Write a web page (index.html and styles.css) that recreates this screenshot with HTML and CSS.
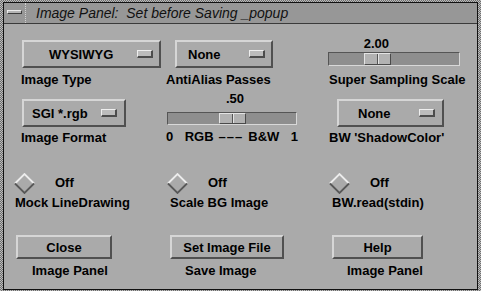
FILE: index.html
```html
<!DOCTYPE html>
<html lang="en">
<head>
  <meta charset="UTF-8">
  <meta name="viewport" content="width=device-width, initial-scale=1.0">
  <title>Image Panel</title>
  <link rel="stylesheet" href="styles.css">
</head>
<body>
  <div class="frame">
    <div class="window">
      <div class="titlebar">
        <div class="menu-btn"><span class="menu-bar"></span></div>
        <div class="title">Image Panel:  Set before Saving _popup</div>
      </div>

      <div class="panel">
        <!-- row 1 -->
        <div class="row row1">
          <div class="cell">
            <div class="btn opt opt-type"><span>WYSIWYG</span><span class="ind"></span></div>
            <div class="lbl lbl-type">Image Type</div>
          </div>
          <div class="cell">
            <div class="btn opt opt-alias"><span>None</span><span class="ind"></span></div>
            <div class="lbl lbl-alias">AntiAlias Passes</div>
          </div>
          <div class="cell">
            <div class="scale scale-super" style="--pos: 35px">
              <div class="scale-value">2.00</div>
              <div class="trough"><div class="thumb"></div></div>
            </div>
            <div class="lbl lbl-super">Super Sampling Scale</div>
          </div>
        </div>

        <!-- row 2 -->
        <div class="row row2">
          <div class="cell">
            <div class="btn opt opt-fmt"><span>SGI *.rgb</span><span class="ind"></span></div>
            <div class="lbl lbl-fmt">Image Format</div>
          </div>
          <div class="cell">
            <div class="scale scale-rgb" style="--pos: 51px">
              <div class="scale-value">.50</div>
              <div class="trough"><div class="thumb"></div></div>
              <div class="range">
                <span>0</span>
                <span class="range-mid"><span>RGB</span><span class="dashes">–––</span><span>B&amp;W</span></span>
                <span>1</span>
              </div>
            </div>
          </div>
          <div class="cell">
            <div class="btn opt opt-bw"><span>None</span><span class="ind"></span></div>
            <div class="lbl lbl-bw">BW 'ShadowColor'</div>
          </div>
        </div>

        <!-- row 3 -->
        <div class="row row3">
          <div class="cell">
            <div class="toggle tg-mock">
              <svg class="diamond" width="21" height="21" viewBox="0 0 21 21">
                <polyline points="1,10.5 10.5,1 20,10.5" fill="none" stroke="#ececec" stroke-width="1.8"/>
                <polyline points="1,10.5 10.5,20 20,10.5" fill="none" stroke="#585858" stroke-width="1.8"/>
              </svg>
              <span class="off">Off</span>
            </div>
            <div class="lbl lbl-mock">Mock LineDrawing</div>
          </div>
          <div class="cell">
            <div class="toggle tg-scale">
              <svg class="diamond" width="21" height="21" viewBox="0 0 21 21">
                <polyline points="1,10.5 10.5,1 20,10.5" fill="none" stroke="#ececec" stroke-width="1.8"/>
                <polyline points="1,10.5 10.5,20 20,10.5" fill="none" stroke="#585858" stroke-width="1.8"/>
              </svg>
              <span class="off">Off</span>
            </div>
            <div class="lbl lbl-scale">Scale BG Image</div>
          </div>
          <div class="cell">
            <div class="toggle tg-read">
              <svg class="diamond" width="21" height="21" viewBox="0 0 21 21">
                <polyline points="1,10.5 10.5,1 20,10.5" fill="none" stroke="#ececec" stroke-width="1.8"/>
                <polyline points="1,10.5 10.5,20 20,10.5" fill="none" stroke="#585858" stroke-width="1.8"/>
              </svg>
              <span class="off">Off</span>
            </div>
            <div class="lbl lbl-read">BW.read(stdin)</div>
          </div>
        </div>

        <!-- row 4 -->
        <div class="row row4">
          <div class="cell">
            <div class="btn push push-close">Close</div>
            <div class="lbl lbl-close">Image Panel</div>
          </div>
          <div class="cell">
            <div class="btn push push-file">Set Image File</div>
            <div class="lbl lbl-file">Save Image</div>
          </div>
          <div class="cell">
            <div class="btn push push-help">Help</div>
            <div class="lbl lbl-help">Image Panel</div>
          </div>
        </div>
      </div>
    </div>
  </div>
</body>
</html>
```

FILE: styles.css
```css
body { margin: 0; font-family: "Liberation Sans", Arial, sans-serif; font-size: 13px; font-weight: bold; color: #000; }

/* window frame + title bar */
.frame { width: 481px; height: 291px; box-sizing: border-box; padding: 2px 3px 1px 3px; background: repeating-conic-gradient(#6e6e6e 0 25%, #bdbdbd 0 50%) 0 0 / 2px 2px; }
.window { height: 100%; box-sizing: border-box; border: 1px solid #111; background: #aaa; display: flex; flex-direction: column; }
.titlebar { flex: none; height: 20px; display: flex; background: #979797; border-bottom: 1px solid #3a3a3a; }
.menu-btn { width: 21px; border-right: 1px dotted #d2d2d2; display: flex; align-items: center; justify-content: center; }
.menu-bar { width: 15px; height: 4px; margin-bottom: 2px; box-sizing: border-box; background: #b4b4b4; border: 1px solid; border-color: #ececec #3c3c3c #3c3c3c #ececec; }
.title { padding-left: 10px; font-size: 14px; font-weight: normal; font-style: italic; line-height: 20px; white-space: pre; color: #111; }

/* panel grid */
.panel { padding: 12px 0 0 10px; }
.row { display: grid; grid-template-columns: 151px 163px 1fr; align-items: start; }
.row2 { margin-top: 4px; }
.row3 { margin-top: 28px; }
.row4 { margin-top: 25px; }
.lbl { line-height: 15px; white-space: nowrap; }

/* buttons */
.btn { box-sizing: border-box; height: 28px; border: 2px solid; border-color: #d6d6d6 #505050 #505050 #d6d6d6; background: #aaa; display: flex; align-items: center; line-height: 15px; white-space: nowrap; }
.opt .ind { margin-left: auto; width: 16px; height: 8px; box-sizing: border-box; background: #bcbcbc; border-style: solid; border-width: 1px 2px 2px 1px; border-color: #eee #4c4c4c #4c4c4c #eee; }
.opt-type { width: 139px; margin: 4px 0 0 8px; padding: 0 6px 0 25px; }
.opt-alias { width: 98px; margin: 4px 0 0 10px; padding: 0 6px 0 11px; }
.opt-fmt { width: 104px; margin: 8px 0 0 8px; padding: 0 7px 0 8px; }
.opt-bw { width: 107px; margin: 8px 0 0 9px; padding: 0 7px 0 19px; }
.lbl-type { margin: 4px 0 0 7px; }
.lbl-alias { margin: 4px 0 0 1px; }
.lbl-fmt { margin: 3px 0 0 7px; }
.lbl-bw { margin: 3px 0 0 1px; }

.push { height: 24px; justify-content: center; }
.push-close { width: 96px; margin-left: 2px; }
.push-file { width: 114px; margin-left: 5px; }
.push-help { width: 91px; margin-left: 4px; }
.lbl-close { margin: 4px 0 0 18px; }
.lbl-file { margin: 4px 0 0 20px; }
.lbl-help { margin: 4px 0 0 19px; }

/* scales */
.scale-value { width: 27px; margin-left: calc(var(--pos) - 1px); text-align: right; line-height: 15px; }
.trough { box-sizing: border-box; display: flex; border: 1px solid; border-color: #555 #d8d8d8 #d8d8d8 #555; background: #8e8e8e; }
.thumb { width: 27px; margin-left: var(--pos); box-sizing: border-box; border: 1px solid; border-color: #e4e4e4 #4a4a4a #4a4a4a #e4e4e4;
  background: linear-gradient(to right, transparent 12px, #555 12px, #555 13px, #e4e4e4 13px, #e4e4e4 14px, transparent 14px), #b2b2b2; }
.scale-super .trough { width: 132px; height: 14px; margin-top: 1px; }
.lbl-super { margin: 6px 0 0 1px; }
.scale-rgb { margin-left: 2px; }
.scale-rgb .trough { width: 130px; height: 13px; margin-top: 6px; }
.range { width: 132px; margin: 4px 0 0 -1px; display: flex; justify-content: space-between; line-height: 15px; }
.range-mid { display: flex; gap: 5px; }
.dashes { letter-spacing: 1px; }

/* toggles */
.toggle { display: flex; align-items: flex-start; gap: 20px; }
.toggle .off { margin-top: 2px; line-height: 15px; }
.tg-scale { margin-left: 2px; }
.tg-read { margin-left: 1px; }
.lbl-mock { margin: 1px 0 0 1px; }
.lbl-scale { margin: 1px 0 0 5px; }
.lbl-read { margin: 1px 0 0 4px; }
```
